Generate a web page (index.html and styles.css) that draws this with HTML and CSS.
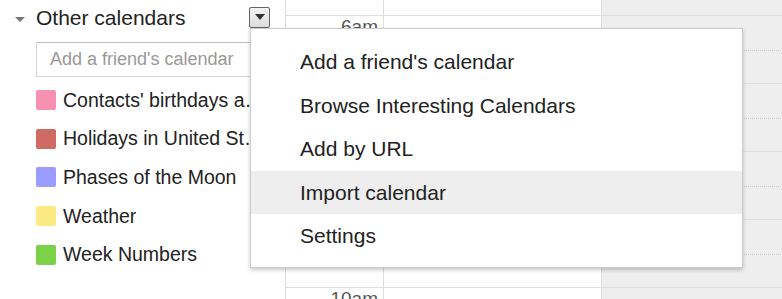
FILE: index.html
```html
<!DOCTYPE html>
<html lang="en">
<head>
    <meta charset="UTF-8">
    <title>Other calendars</title>
    <link rel="stylesheet" href="styles.css">
</head>
<body>

<div class="page">
    <div class="sidebar">
        <div class="cal-header">
            <span class="toggle"></span>
            <span class="cal-title">Other calendars</span>
            <span class="drop-btn"><span class="drop-arrow"></span></span>
        </div>
        <div class="friend-box">Add a friend's calendar</div>
        <div class="cal-list">
            <div class="cal-item"><span class="swatch pink"></span><span class="cal-name">Contacts' birthdays and events</span></div>
            <div class="cal-item"><span class="swatch red"></span><span class="cal-name">Holidays in United States</span></div>
            <div class="cal-item"><span class="swatch purple"></span><span class="cal-name">Phases of the Moon</span></div>
            <div class="cal-item"><span class="swatch yellow"></span><span class="cal-name">Weather</span></div>
            <div class="cal-item"><span class="swatch green"></span><span class="cal-name">Week Numbers</span></div>
        </div>
    </div>

    <div class="grid">
        <div class="col times">
            <div class="stub"></div>
            <div class="hour"><span class="label">6am</span></div>
            <div class="hour"><span class="label">7am</span></div>
            <div class="hour"><span class="label">8am</span></div>
            <div class="hour"><span class="label">9am</span></div>
            <div class="hour"><span class="label">10am</span></div>
        </div>
        <div class="col day">
            <div class="stub"></div>
            <div class="hour"><div class="half"></div></div>
            <div class="hour"><div class="half"></div></div>
            <div class="hour"><div class="half"></div></div>
            <div class="hour"><div class="half"></div></div>
            <div class="hour"><div class="half"></div></div>
        </div>
        <div class="col day shade">
            <div class="stub"></div>
            <div class="hour"><div class="half"></div></div>
            <div class="hour"><div class="half"></div></div>
            <div class="hour"><div class="half"></div></div>
            <div class="hour"><div class="half"></div></div>
            <div class="hour"><div class="half"></div></div>
        </div>
    </div>

    <div class="menu">
        <div class="menu-item">Add a friend's calendar</div>
        <div class="menu-item">Browse Interesting Calendars</div>
        <div class="menu-item">Add by URL</div>
        <div class="menu-item active">Import calendar</div>
        <div class="menu-item">Settings</div>
    </div>
</div>

</body>
</html>
```

FILE: styles.css
```css
body{
    margin:0;
    font-family: 'Liberation Sans', Arial, sans-serif;
    color:#222;
    background:#fff;
    overflow:hidden;
}
.page{
    position:relative;
    display:flex;
    width:782px;
    height:299px;
    overflow:hidden;
}
.sidebar{
    width:285px;
    flex-shrink:0;
}
.cal-header{
    display:flex;
    align-items:center;
    height:36px;
}
.toggle{
    width:0;
    height:0;
    border-left:5px solid transparent;
    border-right:5px solid transparent;
    border-top:5px solid #777;
    margin-left:15px;
    margin-right:11px;
    margin-top:3px;
}
.cal-title{
    font-size:21px;
    flex:1;
}
.drop-btn{
    width:19px;
    height:19px;
    border:1px solid #666;
    border-radius:2px;
    background:linear-gradient(#f4f4f4, #dcdcdc);
    display:flex;
    align-items:center;
    justify-content:center;
    margin-right:15px;
    margin-top:-2px;
}
.drop-arrow{
    width:0;
    height:0;
    border-left:5px solid transparent;
    border-right:5px solid transparent;
    border-top:6px solid #333;
}
.friend-box{
    margin:6px 0 0 36px;
    height:33px;
    line-height:33px;
    border:1px solid #d4d4d4;
    border-top-color:#c0c0c0;
    padding-left:13px;
    font-size:18px;
    color:#999;
    white-space:nowrap;
}
.cal-list{
    margin-top:4px;
}
.cal-item{
    display:flex;
    align-items:center;
    height:38.6px;
    padding:0 14px 0 36px;
    font-size:19.5px;
}
.cal-name{
    white-space:nowrap;
    overflow:hidden;
    text-overflow:ellipsis;
}
.swatch{
    width:20px;
    height:20px;
    border-radius:2px;
    margin-right:7px;
    flex-shrink:0;
}
.pink{ background:#f691b2; }
.red{ background:#d06b64; }
.purple{ background:#9a9cff; }
.yellow{ background:#fbe983; }
.green{ background:#7bd148; }

.grid{
    display:flex;
    flex:1;
}
.col{
    border-left:1px solid #ddd;
    box-sizing:border-box;
}
.times{
    width:98px;
}
.day{
    width:218px;
}
.shade{
    flex:1;
    background:#eee;
}
.stub{
    height:15px;
    border-bottom:1px solid #ddd;
}
.hour{
    height:68px;
    box-sizing:border-box;
    border-bottom:1px solid #ddd;
}
.half{
    height:34px;
    border-bottom:1px dotted #ccc;
}
.label{
    display:block;
    text-align:right;
    padding:0 5px 0 0;
    font-size:19px;
    color:#555;
}
.menu{
    position:absolute;
    left:250px;
    top:28px;
    width:491px;
    padding:11px 0 9px;
    background:#fff;
    border:1px solid #ccc;
    box-shadow:0 2px 4px rgba(0,0,0,.22);
}
.menu-item{
    height:43.5px;
    line-height:43.5px;
    padding-left:49px;
    font-size:21px;
    color:#222;
}
.menu-item.active{
    background:#eee;
}
```
